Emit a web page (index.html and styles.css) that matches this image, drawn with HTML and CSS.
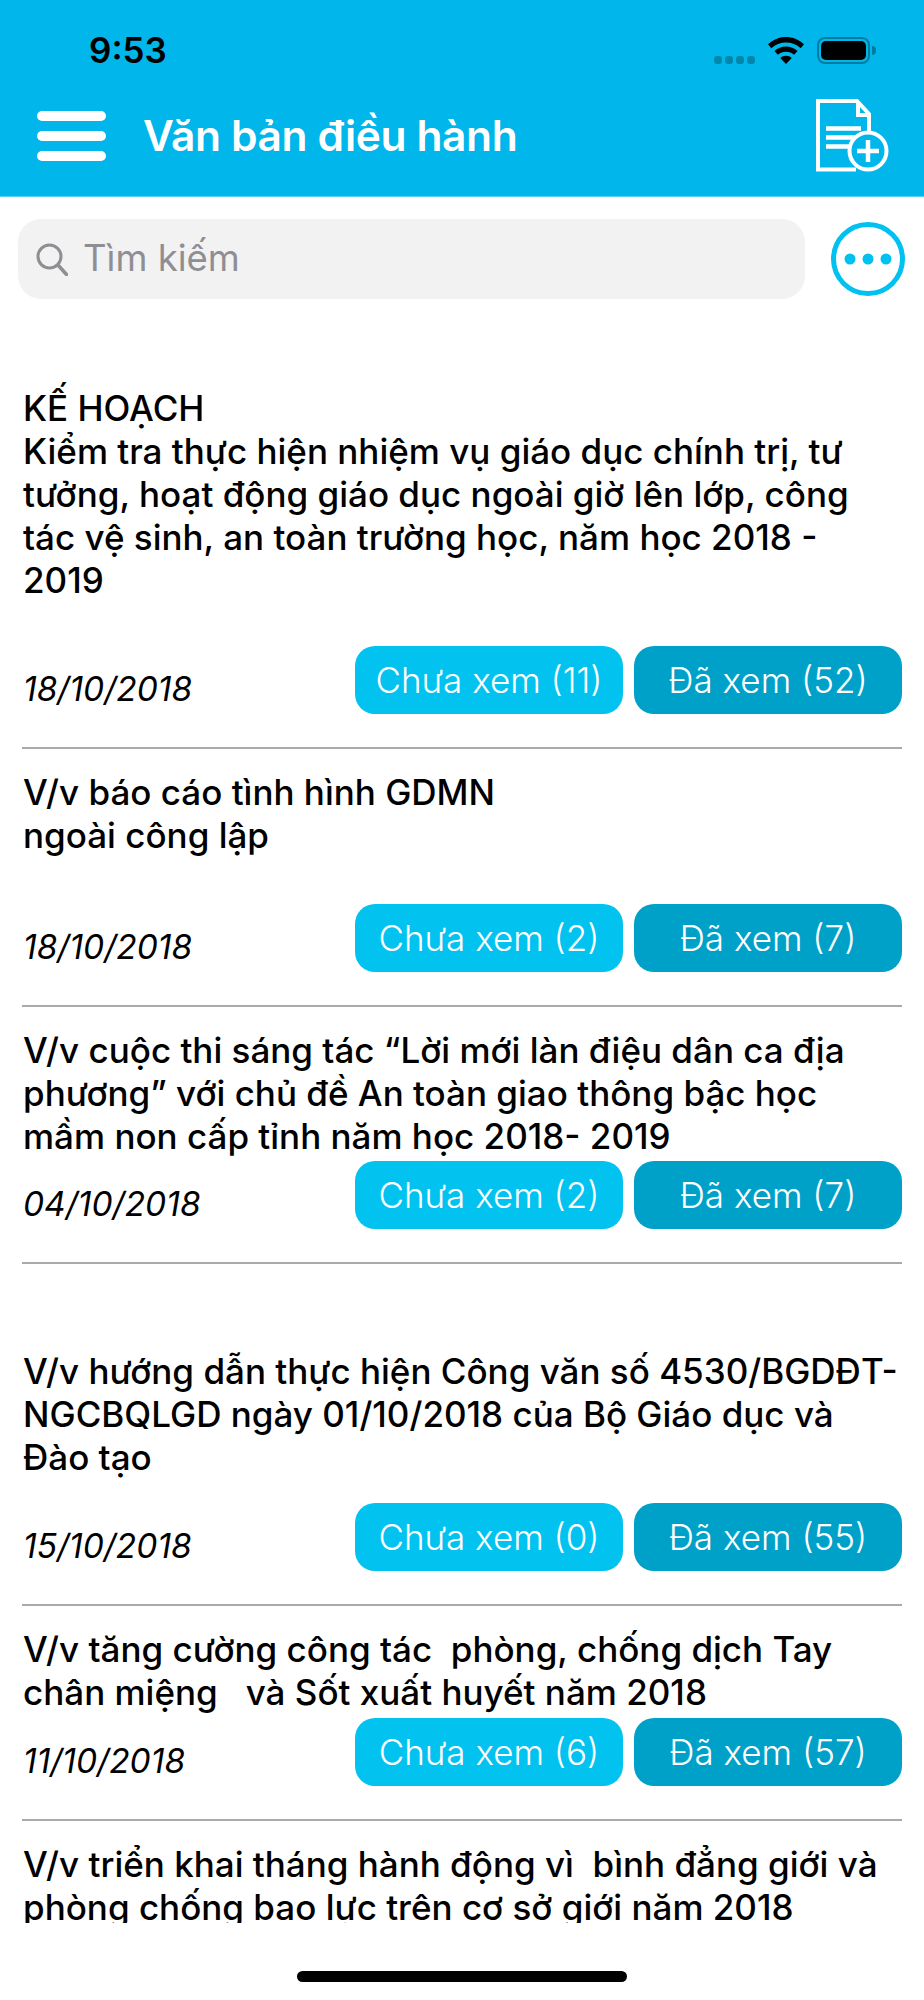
FILE: index.html
```html
<!DOCTYPE html>
<html lang="vi">
<head>
    <meta charset="UTF-8">
    <meta name="viewport" content="width=device-width, initial-scale=1.0">
    <title>Văn bản điều hành</title>
    <link rel="stylesheet" href="styles.css">
</head>
<body>
    <header class="top">
        <div class="status">
            <span class="time">9:53</span>
            <div class="status-icons">
                <div class="signal"><i></i><i></i><i></i><i></i></div>
                <svg class="wifi" width="36" height="27" viewBox="0 0 36 27">
                    <path d="M18 0C11 0 5 2.700 0 7.300l3.300 3.900C7.300 7.500 12.400 5.500 18 5.500s10.700 2 14.700 5.700L36 7.300C31 2.700 25 0 18 0z"/>
                    <path d="M18 9.500c-4.400 0-8.400 1.700-11.500 4.500l3.400 3.800c2.100-1.900 4.900-3 8.100-3s6 1.100 8.100 3l3.400-3.800C26.400 11.200 22.400 9.500 18 9.500z"/>
                    <path d="M18 18.800c-2.200 0-4.200.8-5.700 2.200l5.700 6 5.700-6c-1.500-1.400-3.500-2.200-5.700-2.200z"/>
                </svg>
                <div class="battery"><div class="battery-fill"></div></div>
                <div class="battery-cap"></div>
            </div>
        </div>
        <nav class="nav">
            <div class="burger"><div></div><div></div><div></div></div>
            <h1>Văn bản điều hành</h1>
            <svg class="doc-add" width="73" height="73" viewBox="0 0 73 73" fill="none" stroke="#fff">
                <path d="M40 70.500H2V2h39l12 13v20" stroke-width="4"/>
                <path d="M42 3v13h12" stroke-width="4"/>
                <path d="M10 29.500h35M10 38.500h35M10 47.500h30" stroke-width="4.500"/>
                <circle cx="52" cy="52" r="18.500" fill="#00b6ea" stroke-width="4"/>
                <path d="M52 41v22M41 52h22" stroke-width="4.500"/>
            </svg>
        </nav>
    </header>

    <div class="search-row">
        <div class="search">
            <svg width="32" height="33" viewBox="0 0 32 33" fill="none" stroke="#8e8e93" stroke-width="3">
                <circle cx="13.500" cy="13.500" r="11.500"/>
                <path d="M22 22l8.500 9.500" stroke-linecap="round" stroke-width="3.500"/>
            </svg>
            <span>Tìm kiếm</span>
        </div>
        <svg class="more" width="74" height="74" viewBox="0 0 74 74">
            <circle cx="37" cy="37" r="34.500" fill="none" stroke="#00c1ef" stroke-width="5"/>
            <circle cx="19" cy="37" r="5.500" fill="#00c1ef"/>
            <circle cx="37" cy="37" r="5.500" fill="#00c1ef"/>
            <circle cx="55" cy="37" r="5.500" fill="#00c1ef"/>
        </svg>
    </div>

    <div class="list">
        <div class="item item-first">
            <div class="title">KẾ HOẠCH<br>Kiểm tra thực hiện nhiệm vụ giáo dục chính trị, tư<br>tưởng, hoạt động giáo dục ngoài giờ lên lớp, công<br>tác vệ sinh, an toàn trường học, năm học 2018 -<br>2019</div>
            <div class="meta">
                <span class="date">18/10/2018</span>
                <div class="btn btn-new">Chưa xem (11)</div>
                <div class="btn btn-seen">Đã xem (52)</div>
            </div>
        </div>
        <div class="item">
            <div class="title">V/v báo cáo tình hình GDMN<br>ngoài công lập</div>
            <div class="meta">
                <span class="date">18/10/2018</span>
                <div class="btn btn-new">Chưa xem (2)</div>
                <div class="btn btn-seen">Đã xem (7)</div>
            </div>
        </div>
        <div class="item item-tight">
            <div class="title">V/v cuộc thi sáng tác “Lời mới làn điệu dân ca địa<br>phương” với chủ đề An toàn giao thông bậc học<br>mầm non cấp tỉnh năm học 2018- 2019</div>
            <div class="meta">
                <span class="date">04/10/2018</span>
                <div class="btn btn-new">Chưa xem (2)</div>
                <div class="btn btn-seen">Đã xem (7)</div>
            </div>
        </div>
        <div class="item item-pushed">
            <div class="title">V/v hướng dẫn thực hiện Công văn số 4530/BGDĐT-<br>NGCBQLGD ngày 01/10/2018 của Bộ Giáo dục và<br>Đào tạo</div>
            <div class="meta">
                <span class="date">15/10/2018</span>
                <div class="btn btn-new">Chưa xem (0)</div>
                <div class="btn btn-seen">Đã xem (55)</div>
            </div>
        </div>
        <div class="item item-compact">
            <div class="title">V/v tăng cường công tác&nbsp; phòng, chống dịch Tay<br>chân miệng &nbsp; và Sốt xuất huyết năm 2018</div>
            <div class="meta">
                <span class="date">11/10/2018</span>
                <div class="btn btn-new">Chưa xem (6)</div>
                <div class="btn btn-seen">Đã xem (57)</div>
            </div>
        </div>
        <div class="item">
            <div class="title">V/v triển khai tháng hành động vì&nbsp; bình đẳng giới và<br>phòng chống bạo lực trên cơ sở giới năm 2018</div>
        </div>
    </div>

    <div class="home"><div class="home-bar"></div></div>
</body>
</html>
```

FILE: styles.css
```css
*{margin:0;box-sizing:border-box}
body{
    background-color: #fff;
    font-family: Inter, "Noto Sans", sans-serif;
    color: #000;
    width: 924px;
    height: 2000px;
    overflow: hidden;
    display: flex;
    flex-direction: column;
}

/* header */
.top{
    background-color: #00b6ea;
    height: 197px;
    flex: none;
    border-bottom: 1px solid #55cff2;
}
.status{
    height: 100px;
    display: flex;
    justify-content: space-between;
    padding: 30px 48px 0 89px;
}
.time{
    font-size: 35px;
    font-weight: 600;
    line-height: 40px;
    height: 40px;
}
.status-icons{
    display: flex;
    align-items: flex-start;
    padding-top: 7px;
}
.signal{
    display: flex;
    gap: 3px;
    margin: 19px 13px 0 0;
}
.signal i{
    width: 8px;
    height: 8px;
    border-radius: 3px;
    background-color: #0087ad;
}
.wifi{margin-right: 13px}
.battery{
    width: 53px;
    height: 27px;
    border: 2px solid #007ca0;
    border-radius: 8px;
    padding: 2px;
}
.battery-fill{
    background-color: black;
    height: 100%;
    border-radius: 5px;
}
.battery-cap{
    width: 4px;
    height: 9px;
    margin: 9px 0 0 2px;
    background-color: #007ca0;
    border-radius: 0 4px 4px 0;
}
.nav{
    display: flex;
    align-items: center;
    padding: 0 35px 26px 37px;
    height: 97px;
}
.burger{
    width: 69px;
    display: flex;
    flex-direction: column;
    gap: 10px;
    margin-right: 37px;
}
.burger div{
    height: 10px;
    background-color: white;
    border-radius: 5px;
}
.nav h1{
    color: white;
    font-size: 42.5px;
    font-weight: 600;
    flex: 1;
    letter-spacing: -0.4px;
}

/* search */
.search-row{
    flex: none;
    display: flex;
    align-items: center;
    padding: 22px 19px 0 18px;
    justify-content: space-between;
}
.search{
    width: 787px;
    height: 80px;
    background-color: #f2f2f2;
    border-radius: 23px;
    display: flex;
    align-items: center;
    padding-left: 18px;
    gap: 15px;
    color: #8e8e93;
    font-size: 36.500px;
}
.search span{margin-bottom: 2px}

/* list */
.list{
    flex: 1;
    overflow: hidden;
    padding: 66px 22px 0;
}
.item{
    height: 258px;
    padding-top: 22px;
    border-bottom: 2px solid #aaa;
    display: flex;
    flex-direction: column;
}
.item-first{height: 384px}
.item-tight{height: 257px}
.item-pushed{height: 342px;padding-top: 86px}
.item-compact{height: 215px}
.item:last-child{border-bottom: none}
.title{
    font-size: 35px;
    font-weight: 500;
    line-height: 43px;
    white-space: nowrap;
    margin-left: 1px;
}
.meta{
    margin-top: auto;
    margin-bottom: 33px;
    display: flex;
    gap: 11px;
}
.date{
    font-size: 33.500px;
    font-style: italic;
    flex: 1;
    padding-top: 23px;
    padding-left: 1px;
}
.btn{
    width: 268px;
    height: 68px;
    border-radius: 20px;
    color: white;
    font-size: 35px;
    font-weight: 300;
    display: flex;
    align-items: center;
    justify-content: center;
}
.btn-new{background-color: #02c3f0}
.btn-seen{background-color: #00a1c9}

/* bottom bar */
.home{
    flex: none;
    height: 77px;
    padding-top: 48px;
}
.home-bar{
    width: 330px;
    height: 11px;
    margin: 0 auto;
    background-color: black;
    border-radius: 6px;
}
```
